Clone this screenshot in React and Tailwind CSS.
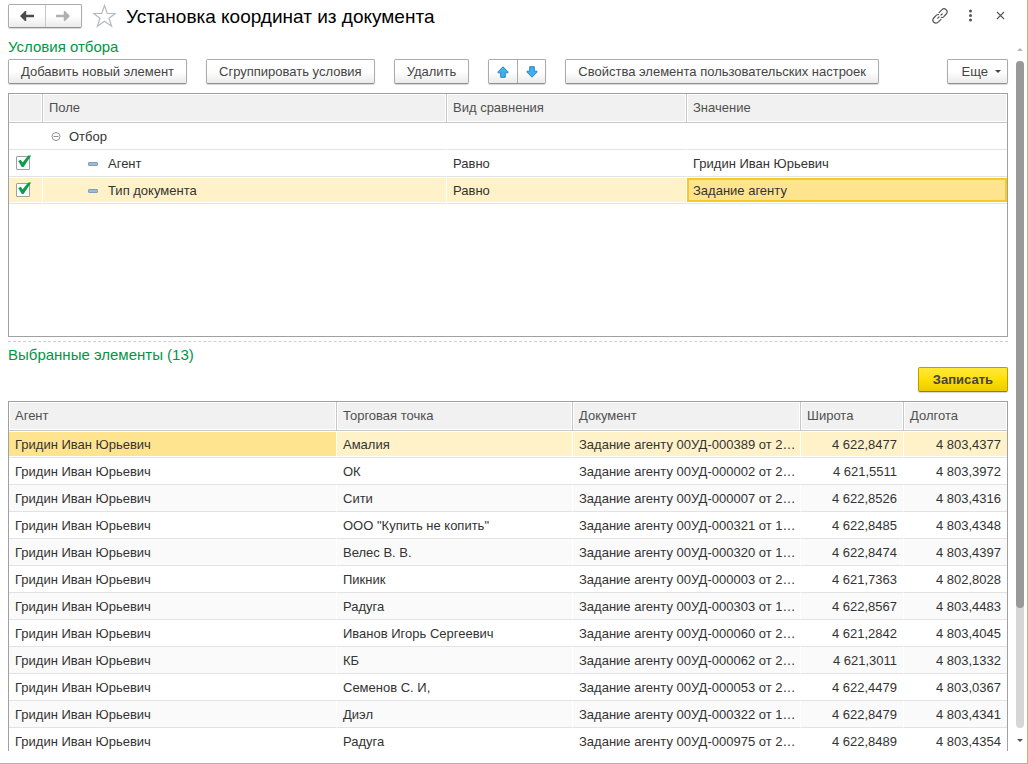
import React, { useState } from 'react';
import clsx from 'clsx';

const conditions = [
  { id: 'agent', field: 'Агент', comparison: 'Равно', value: 'Гридин Иван Юрьевич' },
  { id: 'docType', field: 'Тип документа', comparison: 'Равно', value: 'Задание агенту' },
];

const items = [
  { point: 'Амалия', doc: 'Задание агенту 00УД-000389 от 2…', lat: '4 622,8477', lon: '4 803,4377' },
  { point: 'ОК', doc: 'Задание агенту 00УД-000002 от 2…', lat: '4 621,5511', lon: '4 803,3972' },
  { point: 'Сити', doc: 'Задание агенту 00УД-000007 от 2…', lat: '4 622,8526', lon: '4 803,4316' },
  { point: 'ООО "Купить не копить"', doc: 'Задание агенту 00УД-000321 от 1…', lat: '4 622,8485', lon: '4 803,4348' },
  { point: 'Велес В. В.', doc: 'Задание агенту 00УД-000320 от 1…', lat: '4 622,8474', lon: '4 803,4397' },
  { point: 'Пикник', doc: 'Задание агенту 00УД-000003 от 2…', lat: '4 621,7363', lon: '4 802,8028' },
  { point: 'Радуга', doc: 'Задание агенту 00УД-000303 от 1…', lat: '4 622,8567', lon: '4 803,4483' },
  { point: 'Иванов Игорь Сергеевич', doc: 'Задание агенту 00УД-000060 от 2…', lat: '4 621,2842', lon: '4 803,4045' },
  { point: 'КБ', doc: 'Задание агенту 00УД-000062 от 2…', lat: '4 621,3011', lon: '4 803,1332' },
  { point: 'Семенов С. И,', doc: 'Задание агенту 00УД-000053 от 2…', lat: '4 622,4479', lon: '4 803,0367' },
  { point: 'Диэл', doc: 'Задание агенту 00УД-000322 от 1…', lat: '4 622,8479', lon: '4 803,4341' },
  { point: 'Радуга', doc: 'Задание агенту 00УД-000975 от 2…', lat: '4 622,8489', lon: '4 803,4354' },
];

const buttonLook =
  'border border-[#ababab] border-b-[#8f8f8f] bg-linear-to-b from-white from-50% to-[#ebebeb] text-[#444] shadow-[0_1px_1px_#d8d8d8]';

const Button = ({ className, children, ...props }) => (
  <button
    type="button"
    className={clsx('flex h-[25px] shrink-0 items-center justify-center rounded-xs whitespace-nowrap', buttonLook, className || 'px-3')}
    {...props}
  >
    {children}
  </button>
);

const ArrowIcon = ({ className }) => (
  <svg width="14" height="10" viewBox="0 0 14 10" className={className} aria-hidden="true">
    <path d="M0 5 L5 0 H6.2 V3.7 H14 V6.3 H6.2 V10 H5 Z" fill="currentColor" />
  </svg>
);

const MoveIcon = ({ down }) => (
  <svg width="12" height="12" viewBox="0 0 12 12" className={clsx(down && 'rotate-180')} aria-hidden="true">
    <path d="M6 0.8 L11 5.8 V6.8 H8.3 V11.3 H3.7 V6.8 H1 V5.8 Z" fill="#3fb0ee" stroke="#2f86bd" strokeWidth="1" />
  </svg>
);

const HeadCell = ({ children }) => (
  <th
    scope="col"
    className="h-[29px] border-r border-b border-[#c8c8c8] bg-[#f1f1f1] px-[6px] text-left font-normal text-[#505050] shadow-[inset_0_0_0_1px_#fff] last:border-r-0"
  >
    {children}
  </th>
);

const Cell = ({ className, tight, children }) => (
  <td
    className={clsx(
      'h-[27px] truncate border-r border-b border-r-transparent border-b-[#e3e3e3] bg-clip-padding pt-[2px] pl-[6px] last:border-r-0',
      tight ? 'pr-0' : 'pr-[6px]',
      className
    )}
  >
    {children}
  </td>
);

const CheckMark = ({ label, checked, onChange }) => (
  <label className="relative mb-[2px] ml-px block size-[14px]">
    <input
      type="checkbox"
      aria-label={label}
      checked={checked}
      onChange={onChange}
      className="peer block size-[14px] appearance-none rounded-[1px] border border-[#a0a0a0] bg-white"
    />
    <svg
      width="16"
      height="14"
      viewBox="0 0 16 14"
      className="pointer-events-none absolute -top-px left-0 hidden peer-checked:block"
      aria-hidden="true"
    >
      <path d="M2.2 6 L4.8 4.8 L6.6 7.6 L12.2 0.6 H15.2 L7.6 12 H5.8 Z" fill="#0b9c4c" />
    </svg>
  </label>
);

const TitleBar = () => (
  <header className="flex h-8 shrink-0 items-center">
    <div className={clsx('flex h-6 w-[74px] rounded-xs', buttonLook)}>
      <button type="button" aria-label="Назад" className="flex flex-1 items-center justify-center border-r border-[#c8c8c8]">
        <ArrowIcon className="text-[#4a4a4a]" />
      </button>
      <button type="button" aria-label="Вперед" className="flex flex-1 items-center justify-center">
        <ArrowIcon className="-scale-x-100 text-[#b0b0b0]" />
      </button>
    </div>
    <button type="button" aria-label="В избранное" className="ml-[10px]">
      <svg width="24" height="24" viewBox="0 0 24 24" fill="none" stroke="#b4bac0" strokeWidth="1.2" aria-hidden="true">
        <path d="M12.5 1.5 L15.3 9.5 H23.3 L17 14.2 L19.6 22.3 L12.5 17.3 L5.4 22.3 L8 14.2 L1.7 9.5 H9.7 Z" />
      </svg>
    </button>
    <h1 className="ml-[10px] flex-1 truncate pt-[2px] text-[19px] leading-7 text-black">Установка координат из документа</h1>
    <div className="flex items-center gap-4 text-[#555]">
      <button type="button" aria-label="Ссылка">
        <svg width="16" height="16" viewBox="0 0 16 16" fill="none" stroke="currentColor" strokeWidth="1.2" strokeLinecap="round" aria-hidden="true">
          <path d="M7 4.6 L9.8 1.8 A2.8 2.8 0 0 1 14.2 6 L11.6 8.8 Q10.6 9.8 9.4 9.4" />
          <path d="M9 11.4 L6.2 14.2 A2.8 2.8 0 0 1 1.8 10 L4.4 7.2 Q5.4 6.2 6.6 6.6" />
          <path d="M5.8 10.2 L7 9 M9 7 L10.2 5.8" />
        </svg>
      </button>
      <button type="button" aria-label="Меню">
        <svg width="14" height="14" viewBox="0 0 14 14" fill="currentColor" aria-hidden="true">
          <circle cx="6.5" cy="2" r="1.5" />
          <circle cx="6.5" cy="6.5" r="1.5" />
          <circle cx="6.5" cy="11" r="1.5" />
        </svg>
      </button>
      <button type="button" aria-label="Закрыть">
        <svg width="14" height="14" viewBox="0 0 14 14" fill="none" stroke="currentColor" strokeWidth="1.1" aria-hidden="true">
          <path d="M3 3 L10 10 M10 3 L3 10" />
        </svg>
      </button>
    </div>
  </header>
);

const Toolbar = () => (
  <div className="flex gap-[19px]">
    <Button>Добавить новый элемент</Button>
    <Button>Сгруппировать условия</Button>
    <Button>Удалить</Button>
    <div className={clsx('flex h-[25px] w-[58px] shrink-0 rounded-xs', buttonLook)}>
      <button type="button" aria-label="Переместить вверх" className="flex flex-1 items-center justify-center border-r border-[#ababab]">
        <MoveIcon />
      </button>
      <button type="button" aria-label="Переместить вниз" className="flex flex-1 items-center justify-center">
        <MoveIcon down />
      </button>
    </div>
    <Button>Свойства элемента пользовательских настроек</Button>
    <Button className="ml-auto gap-[7px] pr-[6px] pl-[14px]" aria-haspopup="menu">
      Еще
      <svg width="6" height="3" viewBox="0 0 6 3" aria-hidden="true">
        <path d="M0 0 H6 L3 3 Z" fill="#444" />
      </svg>
    </Button>
  </div>
);

const ConditionsTable = () => {
  const [enabled, setEnabled] = useState({ agent: true, docType: true });
  const selected = 'docType';

  return (
    <div className="mt-[9px] h-[244px] shrink-0 border border-[#a0a0a0]">
      <table className="w-full table-fixed border-separate border-spacing-0">
        <colgroup>
          <col className="w-[34px]" />
          <col />
          <col className="w-[240px]" />
          <col className="w-[320px]" />
        </colgroup>
        <thead>
          <tr>
            <HeadCell />
            <HeadCell>Поле</HeadCell>
            <HeadCell>Вид сравнения</HeadCell>
            <HeadCell>Значение</HeadCell>
          </tr>
        </thead>
        <tbody>
          <tr>
            <Cell />
            <Cell>
              <div className="flex items-center gap-2 pl-[2px]">
                <button type="button" aria-label="Свернуть">
                  <svg width="10" height="10" viewBox="0 0 10 10" fill="none" stroke="#909090" strokeWidth="1" aria-hidden="true">
                    <circle cx="5" cy="4.5" r="4" />
                    <path d="M2.5 4.5 H7.5" />
                  </svg>
                </button>
                Отбор
              </div>
            </Cell>
            <Cell />
            <Cell />
          </tr>
          {conditions.map((row) => {
            const active = row.id === selected;
            const fill = active && 'bg-[#fff2c8] shadow-[inset_0_1px_0_#fff,inset_0_-1px_0_#fff]';
            return (
              <tr key={row.id}>
                <Cell className={fill}>
                  <CheckMark
                    label={row.field}
                    checked={enabled[row.id]}
                    onChange={(e) => setEnabled({ ...enabled, [row.id]: e.target.checked })}
                  />
                </Cell>
                <Cell className={fill}>
                  <div className="flex items-center gap-[10px] pl-[39px]">
                    <span className="h-1 w-[10px] rounded-[1px] border border-[#7d9fba] bg-[#9fbdd2]" />
                    {row.field}
                  </div>
                </Cell>
                <Cell className={fill}>{row.comparison}</Cell>
                {active ? (
                  <td className="h-[27px] border-b border-[#e3e3e3] py-px">
                    <div className="flex h-6 items-center border-2 border-[#fac826] bg-[#ffe48f] px-1 pt-px">{row.value}</div>
                  </td>
                ) : (
                  <Cell>{row.value}</Cell>
                )}
              </tr>
            );
          })}
        </tbody>
      </table>
    </div>
  );
};

const ItemsTable = () => (
  <div className="mt-[9px] mb-3 min-h-0 flex-1 overflow-hidden border border-b-0 border-[#a0a0a0]">
    <table className="w-full table-fixed border-separate border-spacing-0">
      <colgroup>
        <col />
        <col className="w-[236px]" />
        <col className="w-[228px]" />
        <col className="w-[103px]" />
        <col className="w-[103px]" />
      </colgroup>
      <thead>
        <tr>
          <HeadCell>Агент</HeadCell>
          <HeadCell>Торговая точка</HeadCell>
          <HeadCell>Документ</HeadCell>
          <HeadCell>Широта</HeadCell>
          <HeadCell>Долгота</HeadCell>
        </tr>
      </thead>
      <tbody>
        {items.map((item, i) => {
          const active = i === 0;
          const inset = active && 'shadow-[inset_0_1px_0_#fff,inset_0_-1px_0_#fff]';
          const fill = clsx(inset, active ? 'bg-[#fff2c8]' : i % 2 === 0 && 'bg-[#fafafa]');
          return (
            <tr key={i}>
              <Cell className={active ? clsx(inset, 'bg-[#ffe48f]') : fill}>Гридин Иван Юрьевич</Cell>
              <Cell className={fill}>{item.point}</Cell>
              <Cell tight className={fill}>{item.doc}</Cell>
              <Cell className={clsx(fill, 'text-right')}>{item.lat}</Cell>
              <Cell className={clsx(fill, 'text-right')}>{item.lon}</Cell>
            </tr>
          );
        })}
      </tbody>
    </table>
  </div>
);

const ScrollBar = () => (
  <div className="flex w-[19px] shrink-0 flex-col items-center pt-12 pb-[21px] pl-[5px]" aria-hidden="true">
    <svg width="6" height="3" viewBox="0 0 6 3" className="shrink-0">
      <path d="M0 3 H6 L3 0 Z" fill="#b8b8b8" />
    </svg>
    <div className="mt-[10px] mb-[11px] w-2 flex-1 rounded-full bg-[#d6d6d6]">
      <div className="h-[82%] rounded-full bg-[#999]" />
    </div>
    <svg width="6" height="3" viewBox="0 0 6 3" className="shrink-0">
      <path d="M0 0 H6 L3 3 Z" fill="#555" />
    </svg>
  </div>
);

const App = () => (
  <div className="flex h-screen border-r border-b border-[#bdb86c] bg-white pl-2 font-['Liberation_Sans',Arial,sans-serif] text-[13px] leading-4 text-[#333]">
    <main className="flex min-w-0 flex-1 flex-col">
      <TitleBar />
      <h2 className="mt-[5px] mb-[2px] text-[15px] leading-5 text-[#009646]">Условия отбора</h2>
      <Toolbar />
      <ConditionsTable />
      <div className="mt-1 border-t border-dashed border-[#d0d0d0]" />
      <h2 className="mt-[3px] text-[15px] leading-5 text-[#009646]">Выбранные элементы (13)</h2>
      <button
        type="button"
        className="mt-[2px] h-[25px] shrink-0 self-end rounded-xs border border-[#b89f00] border-b-[#938000] bg-linear-to-b from-[#ffe936] via-[#fddf00] to-[#edcb00] px-[14px] font-bold text-[#444] shadow-[0_1px_1px_#d8d8d8]"
      >
        Записать
      </button>
      <ItemsTable />
    </main>
    <ScrollBar />
  </div>
);

export default App;
